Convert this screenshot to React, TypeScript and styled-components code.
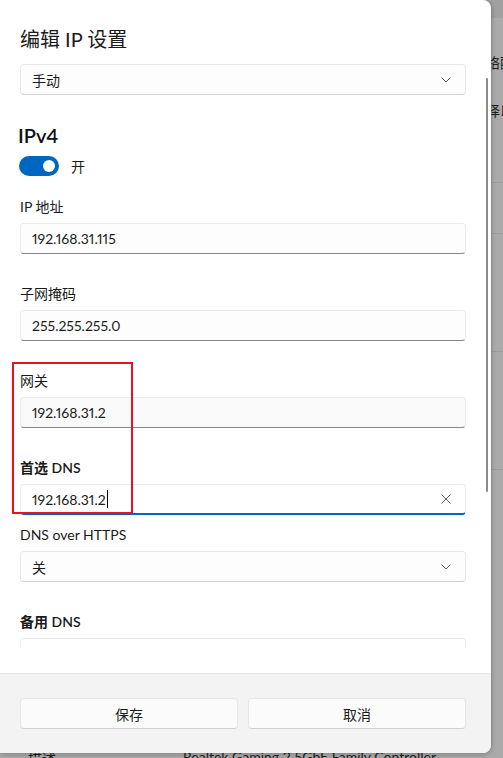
import React from "react";
import styled, { createGlobalStyle } from "styled-components";

const Global = createGlobalStyle`
  html, body { margin: 0; padding: 0; }
  body {
    width: 503px; height: 758px; overflow: hidden;
    font-family: Lato, "Noto Sans CJK SC", sans-serif;
    color: #1b1b1b;
  }
  * { box-sizing: border-box; }
`;

const Screen = styled.div`
  position: relative;
  width: 503px;
  height: 758px;
  overflow: hidden;
  background: #aaaaaa;
`;

/* ---------- dimmed settings page behind the dialog ---------- */
const BgPage = styled.div`
  display: flex;
  flex-direction: column;
  width: 100%;
  height: 100%;
`;

const BgStrip = styled.div`
  height: 18px;
  background: #a0a0a0;
  flex: none;
`;

const BgRow = styled.div<{ $h: number; $line?: boolean }>`
  flex: none;
  height: ${(p) => p.$h}px;
  display: flex;
  align-items: center;
  padding-left: 486px;
  font-size: 14px;
  color: #1e1e1e;
  white-space: nowrap;
  border-bottom: ${(p) => (p.$line ? "1px solid #9c9c9c" : "none")};
`;

const BgFooterRow = styled.div`
  flex: none;
  display: flex;
  align-items: flex-start;
  height: 30px;
  padding-left: 28px;
  font-size: 14px;
  color: #1e1e1e;
  white-space: nowrap;
`;

const BgFooterValue = styled.span`
  margin-left: 127px;
`;

/* ---------- dialog ---------- */
const Dialog = styled.div`
  position: absolute;
  left: 0;
  top: 0;
  width: 491px;
  height: 753px;
  display: flex;
  flex-direction: column;
  background: #ffffff;
  border-radius: 0 8px 8px 0;
  overflow: hidden;
  box-shadow: 0 2px 6px rgba(0, 0, 0, 0.18), 1px 0 2px rgba(0, 0, 0, 0.12);
`;

const Body = styled.div`
  position: relative;
  flex: none;
  height: 673px;
  padding-bottom: 25px;
  display: flex;
  flex-direction: column;
`;

const Scroller = styled.div`
  flex: 1;
  overflow: hidden;
  padding: 25px 25px 0 20px;
  display: flex;
  flex-direction: column;
`;

const ScrollThumb = styled.div`
  position: absolute;
  left: 486px;
  top: 78px;
  width: 2px;
  height: 414px;
  border-radius: 1px;
  background: #8b8b8b;
`;

const Title = styled.h1`
  margin: 0;
  font-size: 20px;
  line-height: 28px;
  font-weight: 400;
  color: #1a1a1a;
`;

const SectionTitle = styled.h2`
  margin: 26px 0 0 -2px;
  font-size: 20px;
  line-height: 28px;
  font-weight: 600;
  color: #111;
`;

const Select = styled.div<{ $mt: number }>`
  flex: none;
  margin-top: ${(p) => p.$mt}px;
  height: 31px;
  display: flex;
  align-items: center;
  justify-content: space-between;
  padding: 0 14px 0 11px;
  background: #fdfdfd;
  border: 1px solid #e8e8e8;
  border-bottom-color: #d2d2d2;
  border-radius: 4px;
  font-size: 14px;
  color: #1b1b1b;
`;

const ToggleRow = styled.div`
  margin-top: 7px;
  display: flex;
  align-items: center;
  gap: 12px;
  height: 20px;
  font-size: 14px;
  margin-left: -1px;
`;

const Toggle = styled.div`
  width: 40px;
  height: 20px;
  border-radius: 10px;
  background: #0067c0;
  display: flex;
  align-items: center;
  justify-content: flex-end;
  padding-right: 4px;
`;

const Knob = styled.div`
  width: 12px;
  height: 12px;
  border-radius: 50%;
  background: #fff;
`;

const Field = styled.div<{ $mt: number }>`
  flex: none;
  margin-top: ${(p) => p.$mt}px;
  display: flex;
  flex-direction: column;
  gap: 6px;
`;

const Label = styled.div<{ $strong?: boolean }>`
  height: 20px;
  line-height: 20px;
  font-size: 14px;
  font-weight: ${(p) => (p.$strong ? 600 : 400)};
  color: #1a1a1a;
`;

const Input = styled.div<{ $bg?: string; $focused?: boolean }>`
  flex: none;
  height: 31px;
  display: flex;
  align-items: center;
  justify-content: space-between;
  padding: 0 11px 0 11px;
  background: ${(p) => p.$bg || "#fdfdfd"};
  border: 1px solid #ebebeb;
  border-bottom: ${(p) => (p.$focused ? "2px solid #0067c0" : "1px solid #878787")};
  border-radius: 4px;
  font-size: 14px;
  font-variant-numeric: proportional-nums;
  color: #1b1b1b;
`;

const ValueText = styled.span`
  display: flex;
  align-items: center;
`;

const Caret = styled.span`
  display: inline-block;
  width: 1px;
  height: 18px;
  margin-left: 1px;
  background: #000;
`;

const Footer = styled.div`
  flex: 1;
  background: #f3f3f3;
  border-top: 1px solid #e5e5e5;
  padding: 24px 25px 0 20px;
  display: grid;
  grid-template-columns: 1fr 1fr;
  column-gap: 10px;
  align-content: start;
`;

const Button = styled.div`
  height: 31px;
  display: flex;
  align-items: center;
  justify-content: center;
  background: #fbfbfb;
  border: 1px solid #e5e5e5;
  border-bottom-color: #d0d0d0;
  border-radius: 4px;
  font-size: 14px;
  color: #1b1b1b;
`;

const Highlight = styled.div`
  position: absolute;
  left: 12px;
  top: 362px;
  width: 121px;
  height: 152px;
  border: 2px solid #e81123;
`;

const Chevron = () => (
  <svg width="10" height="6" viewBox="0 0 10 6" fill="none">
    <path d="M0.5 0.5 L5 5 L9.5 0.5" stroke="#5c5c5c" strokeWidth="1" />
  </svg>
);

const ClearIcon = () => (
  <svg width="10" height="10" viewBox="0 0 10 10" fill="none" style={{ marginRight: 3 }}>
    <path d="M0.5 0.5 L9.5 9.5 M9.5 0.5 L0.5 9.5" stroke="#5c5c5c" strokeWidth="1" />
  </svg>
);

export default function App() {
  return (
    <>
      <Global />
      <Screen>
        <BgPage>
          <BgStrip />
          <BgRow $h={22} />
          <BgRow $h={44}>络配</BgRow>
          <BgRow $h={52}>择以</BgRow>
          <BgRow $h={47} $line />
          <BgRow $h={51} $line />
          <BgRow $h={118} $line />
          <BgRow $h={118} $line />
          <BgRow $h={278} />
          <BgFooterRow>
            描述
            <BgFooterValue>Realtek Gaming 2.5GbE Family Controller</BgFooterValue>
          </BgFooterRow>
        </BgPage>

        <Dialog>
          <Body>
            <Scroller>
              <Title>编辑 IP 设置</Title>
              <Select $mt={11}>
                手动
                <Chevron />
              </Select>

              <SectionTitle>IPv4</SectionTitle>
              <ToggleRow>
                <Toggle>
                  <Knob />
                </Toggle>
                开
              </ToggleRow>

              <Field $mt={21}>
                <Label>IP 地址</Label>
                <Input>192.168.31.115</Input>
              </Field>

              <Field $mt={30}>
                <Label>子网掩码</Label>
                <Input>255.255.255.0</Input>
              </Field>

              <Field $mt={30}>
                <Label>网关</Label>
                <Input $bg="#f9f9f9">192.168.31.2</Input>
              </Field>

              <Field $mt={30}>
                <Label $strong>首选 DNS</Label>
                <Input $bg="#ffffff" $focused>
                  <ValueText>
                    192.168.31.2
                    <Caret />
                  </ValueText>
                  <ClearIcon />
                </Input>
              </Field>

              <Field $mt={10}>
                <Label>DNS over HTTPS</Label>
                <Select $mt={0}>
                  关
                  <Chevron />
                </Select>
              </Field>

              <Field $mt={30}>
                <Label $strong>备用 DNS</Label>
                <Input $bg="#ffffff" />
              </Field>
            </Scroller>
            <ScrollThumb />
          </Body>

          <Footer>
            <Button>保存</Button>
            <Button>取消</Button>
          </Footer>
        </Dialog>

        <Highlight />
      </Screen>
    </>
  );
}
